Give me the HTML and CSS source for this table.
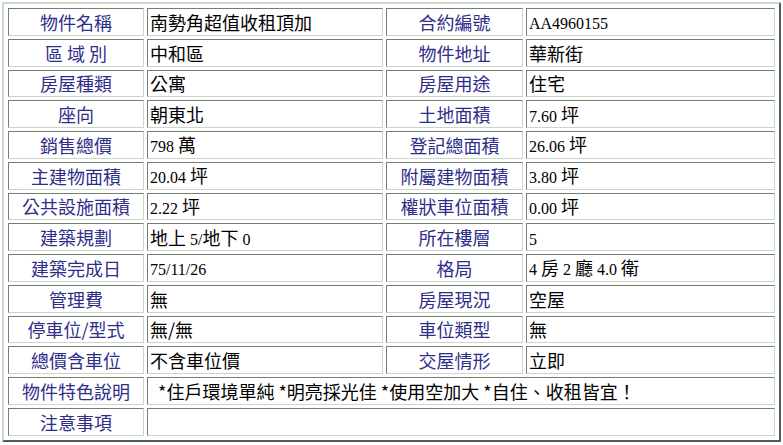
FILE: index.html
```html
<!DOCTYPE html>
<html lang="zh-Hant">
<head>
<meta charset="utf-8">
<title>物件資料</title>
<link rel="stylesheet" href="styles.css">
</head>
<body>
<table class="info">
  <colgroup>
    <col class="c1"><col class="c2"><col class="c3"><col class="c4">
  </colgroup>
  <tr><td class="lb">物件名稱</td><td class="vl">南勢角超值收租頂加</td><td class="lb">合約編號</td><td class="vl"><span class="n">AA4960155</span></td></tr>
  <tr><td class="lb">區 域 別</td><td class="vl">中和區</td><td class="lb">物件地址</td><td class="vl">華新街</td></tr>
  <tr><td class="lb">房屋種類</td><td class="vl">公寓</td><td class="lb">房屋用途</td><td class="vl">住宅</td></tr>
  <tr><td class="lb">座向</td><td class="vl">朝東北</td><td class="lb">土地面積</td><td class="vl"><span class="n">7.60 </span>坪</td></tr>
  <tr><td class="lb">銷售總價</td><td class="vl"><span class="n">798 </span>萬</td><td class="lb">登記總面積</td><td class="vl"><span class="n">26.06 </span>坪</td></tr>
  <tr><td class="lb">主建物面積</td><td class="vl"><span class="n">20.04 </span>坪</td><td class="lb">附屬建物面積</td><td class="vl"><span class="n">3.80 </span>坪</td></tr>
  <tr><td class="lb">公共設施面積</td><td class="vl"><span class="n">2.22 </span>坪</td><td class="lb">權狀車位面積</td><td class="vl"><span class="n">0.00 </span>坪</td></tr>
  <tr><td class="lb">建築規劃</td><td class="vl">地上<span class="n"> 5/</span>地下<span class="n"> 0</span></td><td class="lb">所在樓層</td><td class="vl"><span class="n">5</span></td></tr>
  <tr><td class="lb">建築完成日</td><td class="vl"><span class="n">75/11/26</span></td><td class="lb">格局</td><td class="vl"><span class="n">4 </span>房<span class="n"> 2 </span>廳<span class="n"> 4.0 </span>衛</td></tr>
  <tr><td class="lb">管理費</td><td class="vl">無</td><td class="lb">房屋現況</td><td class="vl">空屋</td></tr>
  <tr><td class="lb">停車位/型式</td><td class="vl">無/無</td><td class="lb">車位類型</td><td class="vl">無</td></tr>
  <tr><td class="lb">總價含車位</td><td class="vl">不含車位價</td><td class="lb">交屋情形</td><td class="vl">立即</td></tr>
  <tr><td class="lb">物件特色說明</td><td class="vl feat" colspan="3">*住戶環境單純 *明亮採光佳 *使用空加大 *自住、收租皆宜！</td></tr>
  <tr><td class="lb">注意事項</td><td class="vl" colspan="3"></td></tr>
</table>
</body>
</html>
```

FILE: styles.css
```css
html, body {
  margin: 0;
  padding: 0;
  background: #ffffff;
}
body {
  padding: 2px 0 0 2px;
}
.info {
  width: 779px;
  table-layout: fixed;
  border-collapse: separate;
  border-spacing: 3px;
  border-style: solid;
  border-width: 2px;
  border-color: #c9d6c9 #4f5f4f #4f5f4f #c9d6c9;
  padding: 1px;
  font-family: "Noto Sans CJK TC", sans-serif;
  font-size: 18px;
}
.c1 { width: 136px; }
.c2 { width: 236px; }
.c3 { width: 137px; }
.c4 { width: auto; }
.info td {
  height: 27.75px;
  box-sizing: border-box;
  padding: 0 2px;
  border-style: solid;
  border-width: 1px;
  border-color: #737f73 #c9d6c9 #c9d6c9 #737f73;
  line-height: 20px;
  white-space: nowrap;
  vertical-align: middle;
  overflow: hidden;
}
.lb {
  text-align: center;
  color: #2e2e8a;
}
.vl {
  color: #000000;
  text-align: left;
}
.n {
  font-family: "Liberation Serif", serif;
  font-size: 16px;
  line-height: 1;
}
.info td.feat {
  padding-left: 10px;
}
```
